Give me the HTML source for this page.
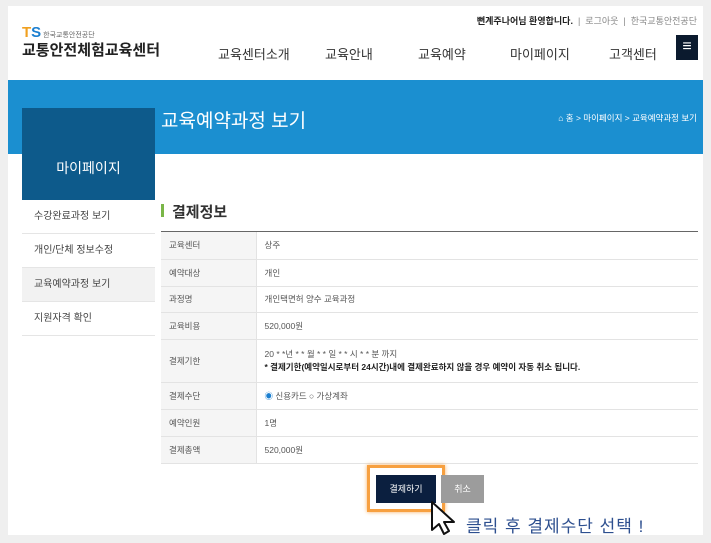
<!DOCTYPE html>
<html><head><meta charset="utf-8"><style>
*{margin:0;padding:0;box-sizing:border-box}
body{width:711px;height:543px;background:#efefef;font-family:"Liberation Sans","Noto Sans CJK KR",sans-serif;position:relative;overflow:hidden;color:#333}
.panel{position:absolute;left:8px;top:6px;width:695px;height:529px;background:#fff;overflow:hidden}
.abs{position:absolute}
.top{right:6px;top:8px;font-size:9px;color:#888;white-space:nowrap}
.top b{color:#222}
.nav{top:38px;font-size:13px;color:#333}
.blue{left:0;top:74px;width:695px;height:74px;background:#1b8fd0}
.side{left:14px;top:102px;width:133px;height:92px;background:#0d5a8b}
.side span{position:absolute;left:0;right:0;top:50px;text-align:center;color:#fff;font-size:14px}
.menu{left:14px;width:133px;font-size:10px;color:#444;padding-left:12px;border-bottom:1px solid #e5e5e5;height:34px;line-height:34px}
table{position:absolute;left:153px;top:226px;width:537px;border-collapse:collapse;font-size:8.5px}
td{border-bottom:1px solid #e3e3e3;padding-left:8px;color:#555}
td.l{background:#f5f5f5;width:95px;border-right:1px solid #e3e3e3}
</style></head><body>
<div class="panel">
<div class="abs top"><b>뻔계주나어님 환영합니다.</b> &nbsp;|&nbsp; 로그아웃 &nbsp;|&nbsp; 한국교통안전공단</div>
<div class="abs" style="left:14px;top:18px;font-size:15px;font-weight:bold;color:#f0a020">T<span style="color:#1b7fd0">S</span><span style="font-size:7px;color:#666;font-weight:normal"> 한국교통안전공단</span></div>
<div class="abs" style="left:14px;top:33px;font-size:15px;font-weight:bold;color:#222">교통안전체험교육센터</div>
<div class="abs nav" style="left:210px">교육센터소개</div>
<div class="abs nav" style="left:317px">교육안내</div>
<div class="abs nav" style="left:410px">교육예약</div>
<div class="abs nav" style="left:502px">마이페이지</div>
<div class="abs nav" style="left:601px">고객센터</div>
<div class="abs" style="left:668px;top:29px;width:22px;height:25px;background:#0b1a2e;color:#fff;font-size:16px;text-align:center;line-height:24px">≡</div>
<div class="abs blue"></div>
<div class="abs" style="left:153px;top:100px;font-size:19px;color:#fff">교육예약과정 보기</div>
<div class="abs" style="right:6px;top:106px;font-size:8.5px;color:#fff">⌂ 홈 &gt; 마이페이지 &gt; 교육예약과정 보기</div>
<div class="abs side"><span>마이페이지</span></div>
<div class="abs menu" style="top:194px">수강완료과정 보기</div>
<div class="abs menu" style="top:228px">개인/단체 정보수정</div>
<div class="abs menu" style="top:262px;background:#f2f2f2">교육예약과정 보기</div>
<div class="abs menu" style="top:296px">지원자격 확인</div>
<div class="abs" style="left:153px;top:198px;width:3px;height:13px;background:#7ab648"></div>
<div class="abs" style="left:164px;top:195px;font-size:15px;font-weight:bold;color:#333">결제정보</div>
<div class="abs" style="left:153px;top:225px;width:537px;height:1px;background:#666"></div>
<table>
<tr style="height:27px"><td class="l">교육센터</td><td>상주</td></tr>
<tr style="height:27px"><td class="l">예약대상</td><td>개인</td></tr>
<tr style="height:26px"><td class="l">과정명</td><td>개인택면허 양수 교육과정</td></tr>
<tr style="height:27px"><td class="l">교육비용</td><td>520,000원</td></tr>
<tr style="height:43px"><td class="l">결제기한</td><td style="line-height:13px">20 * *년 * * 월 * * 일 * * 시 * * 분 까지<br><b style="color:#222">* 결제기한(예약일시로부터 24시간)내에 결제완료하지 않을 경우 예약이 자동 취소 됩니다.</b></td></tr>
<tr style="height:27px"><td class="l">결제수단</td><td><span style="color:#1b7fd0">◉</span> 신용카드 ○ 가상계좌</td></tr>
<tr style="height:27px"><td class="l">예약인원</td><td>1명</td></tr>
<tr style="height:27px"><td class="l">결제총액</td><td>520,000원</td></tr>
</table>
<div class="abs" style="left:359px;top:459px;width:78px;height:47px;border:3px solid #f7a040;box-shadow:0 0 4px #f7b060"></div>
<div class="abs" style="left:368px;top:469px;width:60px;height:28px;background:#0b1f3f;color:#fff;font-size:9px;text-align:center;line-height:28px">결제하기</div>
<div class="abs" style="left:433px;top:469px;width:43px;height:28px;background:#9c9c9c;color:#fff;font-size:9px;text-align:center;line-height:28px">취소</div>
<svg class="abs" style="left:421px;top:494px" width="30" height="36" viewBox="0 0 30 36"><path d="M3 2 L3 30 L10 24 L15 34 L20 31 L15 22 L25 22 Z" fill="#fff" stroke="#111" stroke-width="2" stroke-linejoin="round"/></svg>
<div class="abs" style="left:458px;top:506px;font-size:17px;color:#2d4f8f;letter-spacing:1px">클릭 후 결제수단 선택 !</div>
</div>
</body></html>
